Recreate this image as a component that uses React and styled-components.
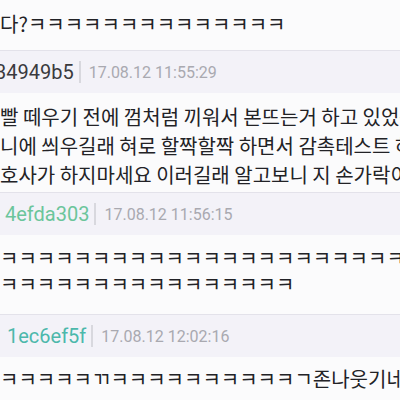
import React from "react";
import styled, { createGlobalStyle } from "styled-components";

const GlobalStyle = createGlobalStyle`
  html, body {
    margin: 0;
    padding: 0;
    background: #fbfbfc;
    overflow: hidden;
  }
`;

const Page = styled.div`
  width: 400px;
  height: 400px;
  overflow: hidden;
  background: #fbfbfc;
  font-family: "Noto Sans CJK KR", "Noto Sans", sans-serif;
`;

const Header = styled.div`
  display: flex;
  align-items: center;
  height: 42px;
  padding-left: ${(p) => Math.max(p.$indent, 0)}px;
  background: #f3f2f8;
  border-top: 1px solid #e3e2ea;
  font-family: Roboto, "Liberation Sans", sans-serif;
`;

const UserId = styled.span`
  font-size: 20px;
  color: ${(p) => p.$color};
  margin-left: ${(p) => Math.min(p.$indent, 0)}px;
`;

const Divider = styled.span`
  width: 2px;
  height: 22px;
  margin: 0 8px 0 5px;
  background: #d8d8de;
`;

const Stamp = styled.span`
  font-size: 16px;
  color: #a9a9b0;
`;

const Body = styled.div`
  padding: ${(p) => p.$top}px 0 ${(p) => p.$bottom}px;
  background: #fbfbfc;
`;

const Line = styled.div`
  font-size: 20px;
  line-height: ${(p) => p.$lh || 28}px;
  color: #222226;
  white-space: nowrap;
`;

const k = (n) => "ㅋ".repeat(n);

const comments = [
  {
    id: "34949b5",
    color: "#3a3a3e",
    time: "17.08.12 11:55:29",
    indent: -5,
    top: 9,
    bottom: 3,
    lh: 29,
    lines: [
      "빨 떼우기 전에 껌처럼 끼워서 본뜨는거 하고 있었는데",
      "니에 씌우길래 혀로 할짝할짝 하면서 감촉테스트 하는데",
      "호사가 하지마세요 이러길래 알고보니 지 손가락이었음",
    ],
  },
  {
    id: "4efda303",
    color: "#6bc59b",
    time: "17.08.12 11:56:15",
    indent: 5,
    top: 10,
    bottom: 17,
    lh: 26,
    lines: [k(24), k(16)],
  },
  {
    id: "1ec6ef5f",
    color: "#4cb8ab",
    time: "17.08.12 12:02:16",
    indent: 7,
    top: 9,
    bottom: 10,
    lh: 26,
    lines: [k(5) + "ㄲ" + k(10) + "ㄱ존나웃기네", k(3)],
  },
];

export default function App() {
  return (
    <Page>
      <GlobalStyle />
      <Body $top={10} $bottom={12}>
        <Line>다?{k(14)}</Line>
      </Body>
      {comments.map((c) => (
        <React.Fragment key={c.id}>
          <Header $indent={c.indent}>
            <UserId $color={c.color} $indent={c.indent}>
              {c.id}
            </UserId>
            <Divider />
            <Stamp>{c.time}</Stamp>
          </Header>
          <Body $top={c.top} $bottom={c.bottom}>
            {c.lines.map((l, i) => (
              <Line key={i} $lh={c.lh}>
                {l}
              </Line>
            ))}
          </Body>
        </React.Fragment>
      ))}
    </Page>
  );
}
